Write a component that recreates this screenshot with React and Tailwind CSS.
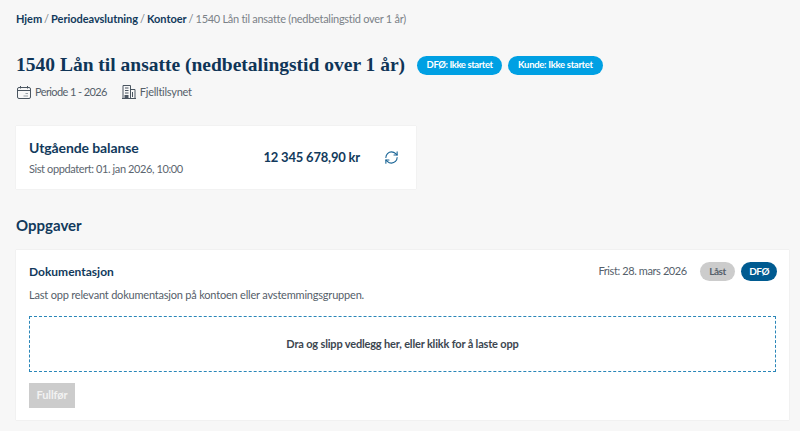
import { RefreshCw } from "lucide-react";

const sans = "font-['Lato','Noto_Sans',sans-serif]";

function CalendarIcon() {
  return (
    <svg width="14" height="14" viewBox="0 0 14 14" fill="none" stroke="#4a5560" strokeWidth="1">
      <rect x="0.5" y="2.5" width="13" height="11" rx="1.5" />
      <path d="M0.5 5.5h13M3.5 1v2.5M10.5 1v2.5" />
      <path d="M6.5 11h4.5M8.5 8.5h2.5" strokeWidth="1.2" stroke="#9aa1a8" />
    </svg>
  );
}

function BuildingIcon() {
  return (
    <svg width="14" height="14" viewBox="0 0 14 14" fill="none" stroke="#4a5560" strokeWidth="1">
      <path d="M1 13.5V0.5h7.5v13M8.5 4.5h4.5v9M0 13.5h14" />
      <path d="M3 3h3.5M3 5.5h3.5M3 8h3.5M10.5 7v5" />
      <rect x="3" y="10.5" width="3" height="3" fill="#4a5560" />
    </svg>
  );
}

export default function App() {
  return (
    <div className={`min-h-[431px] bg-[#f7f7f7] pl-4 pr-[11px] pt-3 pb-[11px] text-[#44505c] ${sans}`}>
      <nav className="flex items-center gap-[2px] text-[11px] leading-[14px] text-[#7b8288]">
        <span className="font-bold tracking-[-0.05px] text-[#123a5c]">Hjem</span>
        <span>/</span>
        <span className="font-bold tracking-[-0.05px] text-[#123a5c]">Periodeavslutning</span>
        <span>/</span>
        <span className="font-bold tracking-[-0.05px] text-[#123a5c]">Kontoer</span>
        <span>/</span>
        <span className="tracking-[-0.28px]">1540 Lån til ansatte (nedbetalingstid over 1 år)</span>
      </nav>

      <div className="mt-[26px] flex items-center gap-[12px]">
        <h1 className="font-['Liberation_Serif',serif] text-[19.5px] font-bold leading-[26px] text-[#0f3557]">
          1540 Lån til ansatte (nedbetalingstid over 1 år)
        </h1>
        <div className="flex items-center gap-[6px]">
          <span className="flex h-[19px] items-center rounded-full bg-[#00a0e3] px-[9.5px] text-[9.5px] font-bold tracking-[-0.42px] text-white">
            DFØ: Ikke startet
          </span>
          <span className="flex h-[19px] items-center rounded-full bg-[#00a0e3] px-[10px] text-[9.5px] font-bold tracking-[-0.3px] text-white">
            Kunde: Ikke startet
          </span>
        </div>
      </div>

      <div className="mt-[7px] flex items-center gap-[15px] text-[11px] leading-[14px] text-[#55606a]">
        <span className="flex items-center gap-[4px] pl-px tracking-[-0.6px]">
          <CalendarIcon />
          Periode 1 - 2026
        </span>
        <span className="flex items-center gap-[4px] tracking-[-0.25px]">
          <BuildingIcon />
          Fjelltilsynet
        </span>
      </div>

      <section className="mt-[27px] flex h-[63px] w-[400px] items-center justify-between bg-white px-[13px] shadow-[0_0_1px_rgba(0,0,0,0.12)]">
        <div>
          <h2 className="text-[14px] font-bold leading-[18px] tracking-[-0.1px] text-[#123a5c]">Utgående balanse</h2>
          <p className="mt-[5px] text-[11px] leading-[14px] tracking-[-0.4px] text-[#5c666f]">Sist oppdatert: 01. jan 2026, 10:00</p>
        </div>
        <div className="flex items-center gap-[24px] pr-[4px]">
          <span className="text-[13px] font-bold tracking-[-0.2px] text-[#123a5c]">12 345 678,90 kr</span>
          <RefreshCw size={15} strokeWidth={1.75} className="text-[#1a6596]" />
        </div>
      </section>

      <h2 className="mt-[25px] text-[15px] font-bold leading-[22px] text-[#123a5c]">Oppgaver</h2>

      <section className="mt-[14px] bg-white px-[13px] pb-[12px] pt-[12px] shadow-[0_0_1px_rgba(0,0,0,0.15)]">
        <div className="flex items-center justify-between">
          <h3 className="text-[12px] font-bold text-[#123a5c]">Dokumentasjon</h3>
          <div className="-mr-px flex items-center gap-[13px]">
            <span className="text-[11px] tracking-[-0.4px] text-[#55606a]">Frist: 28. mars 2026</span>
            <div className="flex items-center gap-[6px]">
              <span className="flex h-[19px] items-center rounded-full bg-[#cccccc] px-[9.5px] text-[10px] font-bold tracking-[-0.5px] text-[#55606a]">Låst</span>
              <span className="flex h-[19px] items-center rounded-full bg-[#005b91] px-[8px] text-[10px] font-bold tracking-[-0.5px] text-white">DFØ</span>
            </div>
          </div>
        </div>
        <p className="mt-[7px] text-[11px] leading-[14px] tracking-[-0.2px] text-[#55606a]">
          Last opp relevant dokumentasjon på kontoen eller avstemmingsgruppen.
        </p>
        <div className="mt-[14px] flex h-[56px] items-center justify-center border border-dashed border-[#2a86b8] text-[11px] font-bold tracking-[-0.17px] text-[#3c4650]">
          Dra og slipp vedlegg her, eller klikk for å laste opp
        </div>
        <button className="mt-[11px] block h-[25px] w-[46px] bg-[#cccccc] text-[11px] font-bold tracking-[-0.1px] text-[#f2f2f2]">Fullfør</button>
      </section>
    </div>
  );
}
